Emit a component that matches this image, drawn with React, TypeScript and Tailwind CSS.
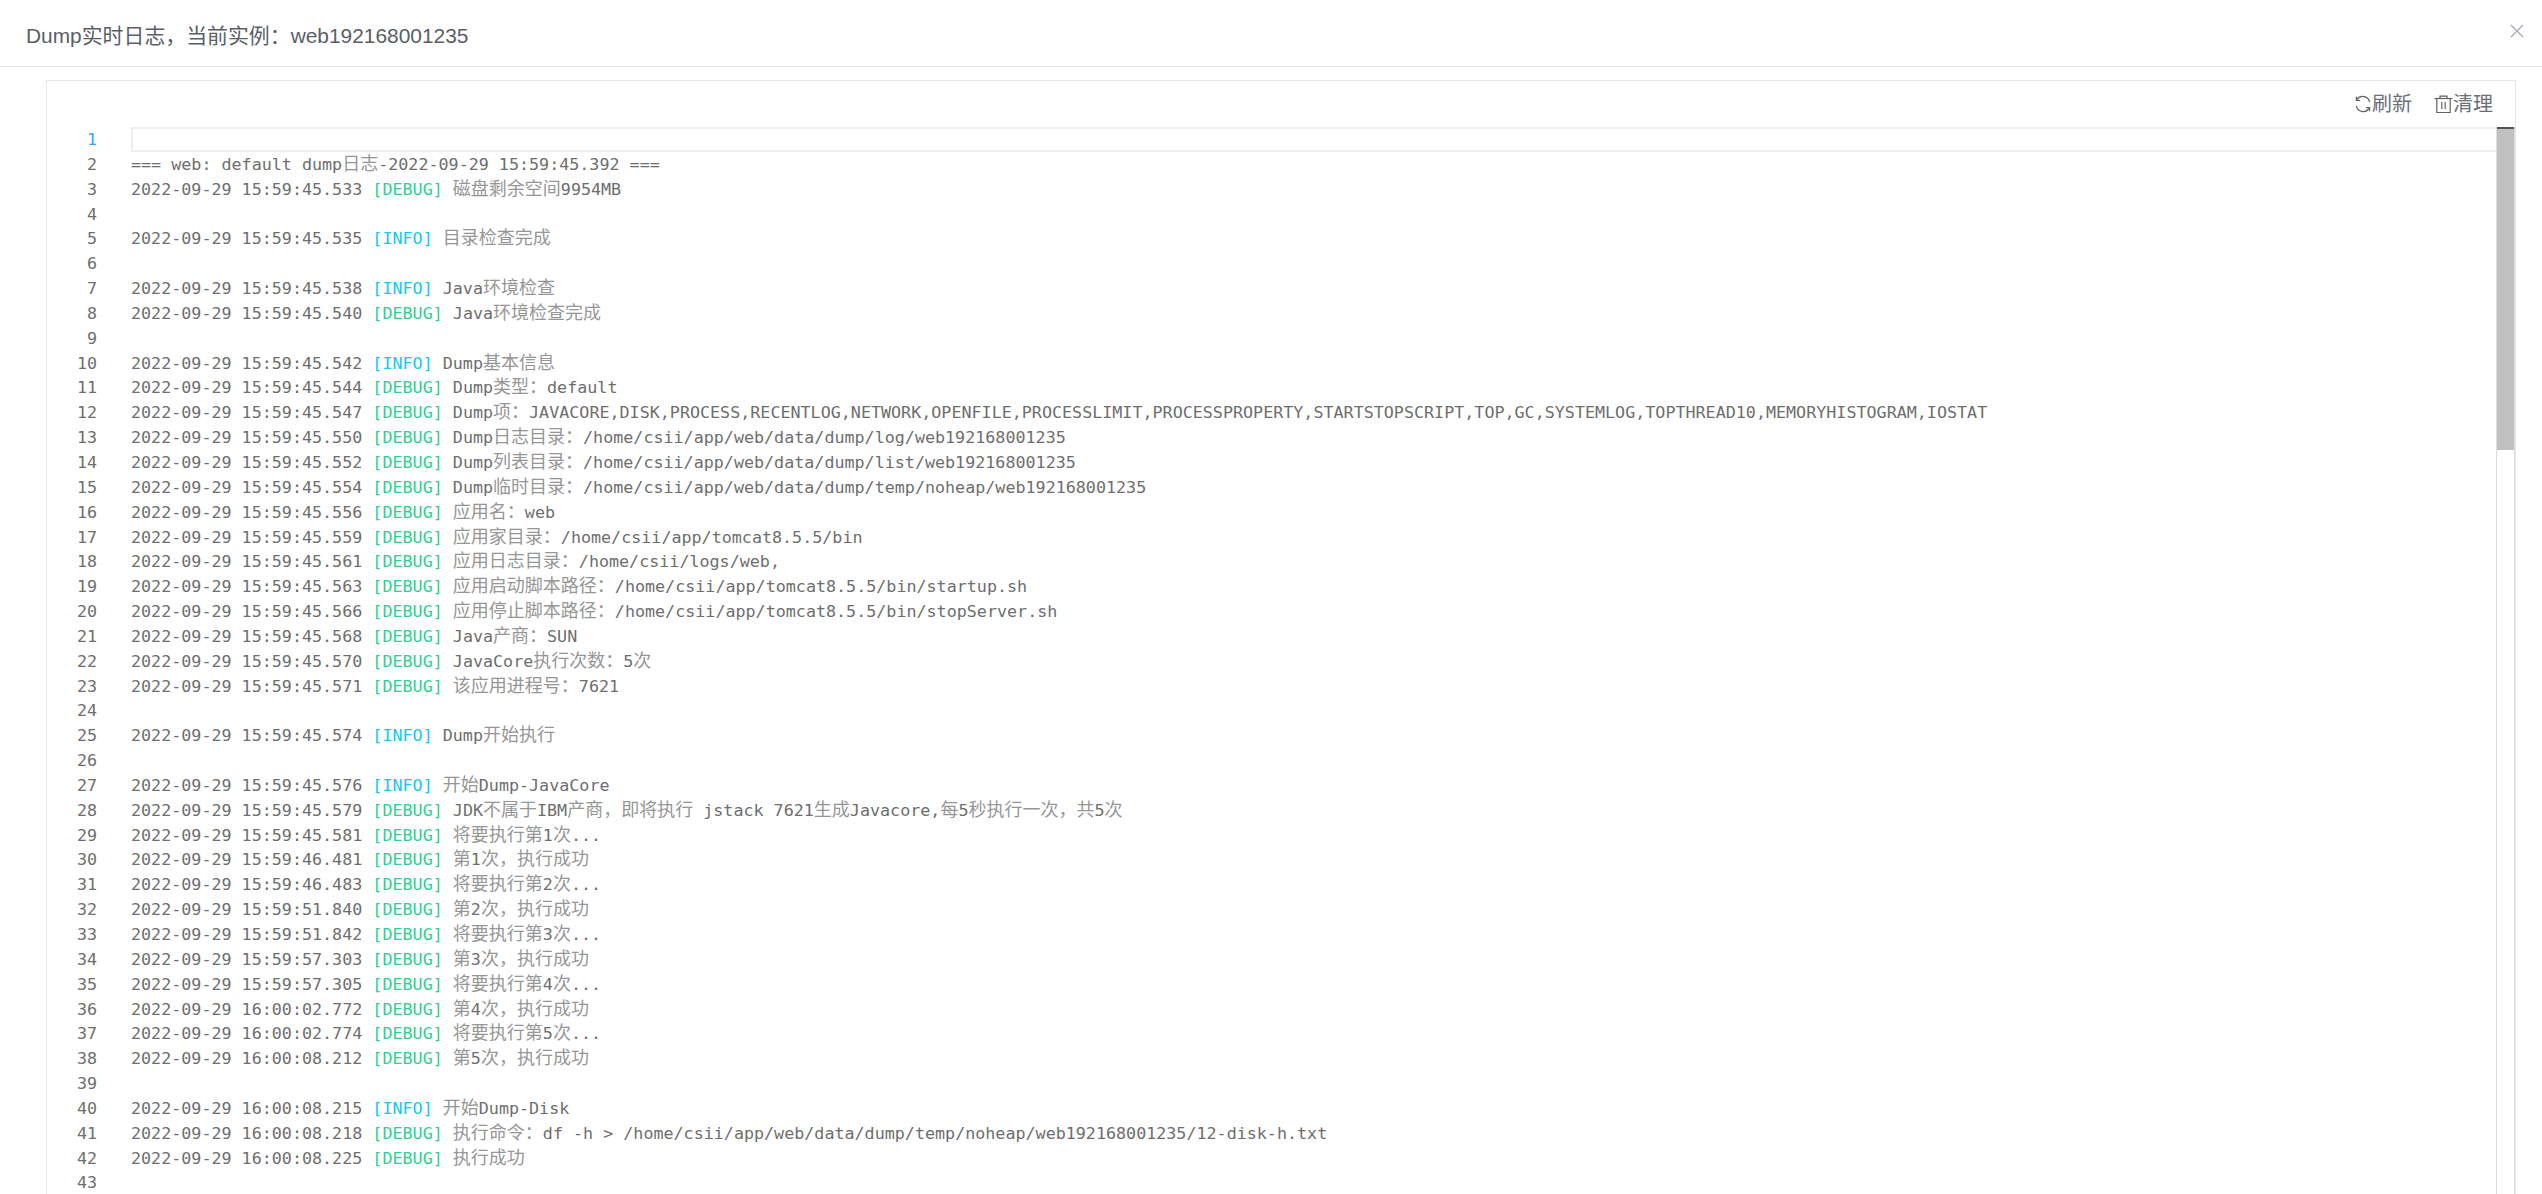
import React from "react";

type L = string;
const lines: L[] = [
  "",
  "=== web: default dump日志-2022-09-29 15:59:45.392 ===",
  "2022-09-29 15:59:45.533 [DEBUG] 磁盘剩余空间9954MB",
  "",
  "2022-09-29 15:59:45.535 [INFO] 目录检查完成",
  "",
  "2022-09-29 15:59:45.538 [INFO] Java环境检查",
  "2022-09-29 15:59:45.540 [DEBUG] Java环境检查完成",
  "",
  "2022-09-29 15:59:45.542 [INFO] Dump基本信息",
  "2022-09-29 15:59:45.544 [DEBUG] Dump类型：default",
  "2022-09-29 15:59:45.547 [DEBUG] Dump项：JAVACORE,DISK,PROCESS,RECENTLOG,NETWORK,OPENFILE,PROCESSLIMIT,PROCESSPROPERTY,STARTSTOPSCRIPT,TOP,GC,SYSTEMLOG,TOPTHREAD10,MEMORYHISTOGRAM,IOSTAT",
  "2022-09-29 15:59:45.550 [DEBUG] Dump日志目录：/home/csii/app/web/data/dump/log/web192168001235",
  "2022-09-29 15:59:45.552 [DEBUG] Dump列表目录：/home/csii/app/web/data/dump/list/web192168001235",
  "2022-09-29 15:59:45.554 [DEBUG] Dump临时目录：/home/csii/app/web/data/dump/temp/noheap/web192168001235",
  "2022-09-29 15:59:45.556 [DEBUG] 应用名：web",
  "2022-09-29 15:59:45.559 [DEBUG] 应用家目录：/home/csii/app/tomcat8.5.5/bin",
  "2022-09-29 15:59:45.561 [DEBUG] 应用日志目录：/home/csii/logs/web,",
  "2022-09-29 15:59:45.563 [DEBUG] 应用启动脚本路径：/home/csii/app/tomcat8.5.5/bin/startup.sh",
  "2022-09-29 15:59:45.566 [DEBUG] 应用停止脚本路径：/home/csii/app/tomcat8.5.5/bin/stopServer.sh",
  "2022-09-29 15:59:45.568 [DEBUG] Java产商：SUN",
  "2022-09-29 15:59:45.570 [DEBUG] JavaCore执行次数：5次",
  "2022-09-29 15:59:45.571 [DEBUG] 该应用进程号：7621",
  "",
  "2022-09-29 15:59:45.574 [INFO] Dump开始执行",
  "",
  "2022-09-29 15:59:45.576 [INFO] 开始Dump-JavaCore",
  "2022-09-29 15:59:45.579 [DEBUG] JDK不属于IBM产商，即将执行 jstack 7621生成Javacore,每5秒执行一次，共5次",
  "2022-09-29 15:59:45.581 [DEBUG] 将要执行第1次...",
  "2022-09-29 15:59:46.481 [DEBUG] 第1次，执行成功",
  "2022-09-29 15:59:46.483 [DEBUG] 将要执行第2次...",
  "2022-09-29 15:59:51.840 [DEBUG] 第2次，执行成功",
  "2022-09-29 15:59:51.842 [DEBUG] 将要执行第3次...",
  "2022-09-29 15:59:57.303 [DEBUG] 第3次，执行成功",
  "2022-09-29 15:59:57.305 [DEBUG] 将要执行第4次...",
  "2022-09-29 16:00:02.772 [DEBUG] 第4次，执行成功",
  "2022-09-29 16:00:02.774 [DEBUG] 将要执行第5次...",
  "2022-09-29 16:00:08.212 [DEBUG] 第5次，执行成功",
  "",
  "2022-09-29 16:00:08.215 [INFO] 开始Dump-Disk",
  "2022-09-29 16:00:08.218 [DEBUG] 执行命令：df -h > /home/csii/app/web/data/dump/temp/noheap/web192168001235/12-disk-h.txt",
  "2022-09-29 16:00:08.225 [DEBUG] 执行成功",
  "",
];

function Mixed({ text }: { text: string }) {
  const parts = text.split(/([\u3000-\u9fff\uff00-\uffef]+)/);
  return (
    <>
      {parts.map((p, i) =>
        i % 2 === 1 ? (
          <span key={i} className="text-[18px] leading-none text-[#969696] font-['Noto_Sans_CJK_SC',sans-serif]">
            {p}
          </span>
        ) : (
          <span key={i}>{p}</span>
        )
      )}
    </>
  );
}

function LogText({ text }: { text: string }) {
  const m = text.match(/^(\S+ \S+ )(\[(?:DEBUG|INFO)\])( .*)$/);
  if (!m) return <Mixed text={text} />;
  return (
    <>
      <span>{m[1]}</span>
      <span className={m[2] === "[INFO]" ? "text-[#14c8f5]" : "text-[#2fcf8f]"}>{m[2]}</span>
      <Mixed text={m[3]} />
    </>
  );
}

function Refresh() {
  return (
    <svg width="18" height="18" viewBox="0 0 18 18" fill="none" stroke="#606266" strokeWidth="1.2">
      <path d="M15.6 7.2A7 7 0 0 0 3 4.4" />
      <path d="M2.4 1.8v3.6H6" />
      <path d="M2.4 10.8A7 7 0 0 0 15 13.6" />
      <path d="M15.6 16.2v-3.6H12" />
    </svg>
  );
}

function Trash() {
  return (
    <svg width="19" height="19" viewBox="0 0 19 19" fill="none" stroke="#606266" strokeWidth="1.2">
      <path d="M0.5 3.5h18" />
      <path d="M6 3.5V1.2h7v2.3" />
      <path d="M2.8 3.5v14h13.4v-14" />
      <path d="M7.8 7v7M11.2 7v7" />
    </svg>
  );
}

export default function App() {
  return (
    <div className="w-full h-[1194px] overflow-hidden bg-white font-['Liberation_Sans','Noto_Sans_CJK_SC',sans-serif]">
      <header className="h-[67px] border-b border-[#e4e4ec] flex items-center justify-between pl-[26px] pr-[18px]">
        <h1 className="mt-[6px] text-[20.9px] text-[#5a5e66] font-normal">Dump实时日志，当前实例：web192168001235</h1>
        <svg className="mb-[4px]" width="14" height="14" viewBox="0 0 14 14" stroke="#a0a4ac" strokeWidth="1.1">
          <path d="M1 1l12 12M13 1L1 13" />
        </svg>
      </header>
      <main className="pl-[46px] pr-[26px] pt-[13px]">
        <section className="border border-[#e4e7ed] h-[1200px]">
          <div className="h-[46px] flex items-center justify-end gap-[22px] pr-[22px] text-[20px] text-[#6b6f76]">
            <span className="flex items-center gap-0"><Refresh />刷新</span>
            <span className="flex items-center gap-0"><Trash />清理</span>
          </div>
          <div className="relative">
            <div className="font-['DejaVu_Sans_Mono','Noto_Sans_CJK_SC',monospace] text-[16.72px] text-[#6e6e6e]">
              {lines.map((t, i) => (
                <div key={i} className="flex h-[24.85px] leading-[25.2px] whitespace-pre">
                  <div className={`w-[50px] text-right shrink-0 ${i === 0 ? "text-[#3ba1ff]" : "text-[#6e6e6e]"}`}>{i + 1}</div>
                  <div className="ml-[34px] flex-1">
                    {i === 0 ? (
                      <div className="h-[24.85px] border-2 border-[#eeeeee] border-r-0" />
                    ) : (
                      <LogText text={t} />
                    )}
                  </div>
                </div>
              ))}
            </div>
            <div className="absolute right-0 top-0 bottom-0 w-[19px] border-x border-[#dddddd]">
              <div className="h-[323px] bg-[#c0c0c0] border-t-2 border-[#555555]" />
            </div>
          </div>
        </section>
      </main>
    </div>
  );
}
